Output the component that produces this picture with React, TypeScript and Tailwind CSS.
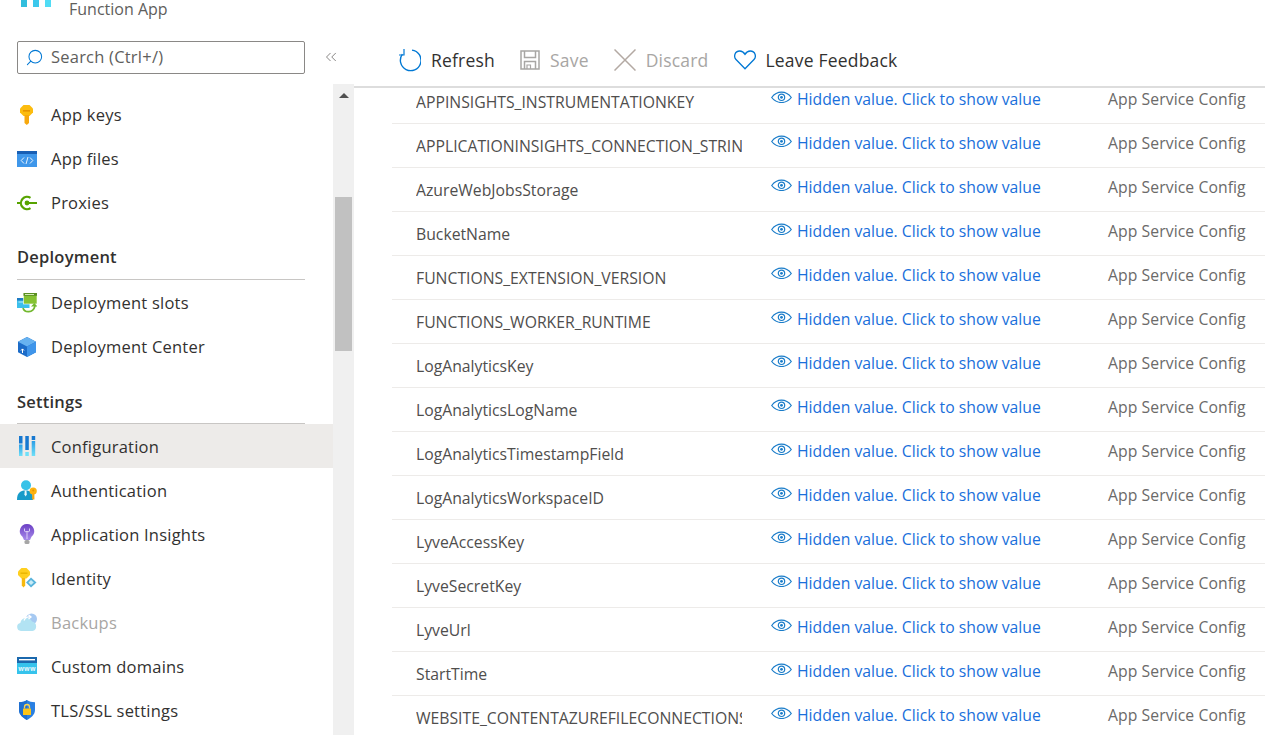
import { ChevronsLeft, Search } from "lucide-react";
import type { ReactNode } from "react";

const settings = [
  "APPINSIGHTS_INSTRUMENTATIONKEY",
  "APPLICATIONINSIGHTS_CONNECTION_STRING",
  "AzureWebJobsStorage",
  "BucketName",
  "FUNCTIONS_EXTENSION_VERSION",
  "FUNCTIONS_WORKER_RUNTIME",
  "LogAnalyticsKey",
  "LogAnalyticsLogName",
  "LogAnalyticsTimestampField",
  "LogAnalyticsWorkspaceID",
  "LyveAccessKey",
  "LyveSecretKey",
  "LyveUrl",
  "StartTime",
  "WEBSITE_CONTENTAZUREFILECONNECTIONSTRING",
];

function Icon({ children }: { children: ReactNode }) {
  return (
    <svg width="20" height="20" viewBox="0 0 20 20" className="shrink-0">
      {children}
    </svg>
  );
}

const KeyIcon = () => (
  <Icon>
    <path d="M6.500 0h6l3.500 3.500v4L12.500 11h-6L3 7.500v-4z" fill="#fcbc0f" />
    <path d="M7.500 10h4.500v8l-2.200 2-2.300-2z" fill="#f7a80d" />
    <rect x="6" y="5" width="7" height="1.600" fill="#e59400" />
  </Icon>
);

const FilesIcon = () => (
  <Icon>
    <rect x="0" y="2" width="20" height="16" fill="#3f97ea" />
    <rect x="0" y="2" width="20" height="3" fill="#185fb4" />
    <path d="M7 8.500l-2.800 3L7 14.500M13 8.500l2.800 3-2.800 3M11 8l-2 7" stroke="#e8f3fd" strokeWidth="1" fill="none" />
  </Icon>
);

const ProxyIcon = () => (
  <Icon>
    <path d="M0 10h4M10 10h10" stroke="#57a300" strokeWidth="2" />
    <path d="M13.500 4.800a6.200 6.200 0 1 0 0 10.400" stroke="#57a300" strokeWidth="2.200" fill="none" />
    <circle cx="10" cy="10" r="2.400" fill="#57a300" />
  </Icon>
);

const SlotsIcon = () => (
  <Icon>
    <rect x="0" y="5" width="12.500" height="10" fill="#3cc0ec" />
    <rect x="0" y="5" width="12.500" height="2.500" fill="#1e7cc4" />
    <rect x="1.500" y="8.500" width="6" height="1" fill="#bdeafa" />
    <rect x="6.500" y="0" width="13.500" height="11" fill="#86c232" stroke="#fff" strokeWidth="0.600" />
    <rect x="6.500" y="0" width="13.500" height="2.800" fill="#5a8f22" />
    <rect x="8" y="1" width="9" height="1" fill="#d5ecb6" />
    <path d="M6 15c1.500 5 10 5.500 12-2" stroke="#72b82e" strokeWidth="1.700" fill="none" />
    <path d="M14 13.500h6.500l-3.200-3.500z" fill="#72b82e" />
  </Icon>
);

const CenterIcon = () => (
  <Icon>
    <path d="M10 0l9 4.800v10.400L10 20l-9-4.800V4.800z" fill="#1c6cc8" />
    <path d="M10 0l9 4.800L10 9.500 1 4.800z" fill="#67b2f0" />
    <path d="M10 9.500V20l9-4.800V4.800z" fill="#3f95ea" />
    <path d="M5.500 16v-4M4 13.500l1.500-1.600L7 13.500" stroke="#fff" strokeWidth="1" fill="none" />
  </Icon>
);

const ConfigIcon = () => (
  <Icon>
    <defs>
      <linearGradient id="cfg" x1="0" y1="0" x2="0" y2="1">
        <stop offset="0" stopColor="#2c9ee6" />
        <stop offset="1" stopColor="#6fe0f8" />
      </linearGradient>
    </defs>
    <rect x="2" y="0" width="3.500" height="7.500" fill="#1778d0" />
    <rect x="2" y="8.500" width="3.500" height="11.500" fill="url(#cfg)" />
    <rect x="8.300" y="0" width="3.500" height="14" fill="#1778d0" />
    <rect x="8.300" y="16" width="3.500" height="4" fill="#6fe0f8" />
    <rect x="14.700" y="0" width="3.500" height="4" fill="#1778d0" />
    <rect x="14.700" y="5" width="3.500" height="15" fill="url(#cfg)" />
  </Icon>
);

const AuthIcon = () => (
  <Icon>
    <circle cx="9" cy="5.200" r="5" fill="#37c2e8" />
    <path d="M0 20c0-7 3-9.500 8.500-9.500S16 13 16 20z" fill="#179bc9" />
    <path d="M7.800 10.500h1.600l.4 4-1.200 2-1.200-2z" fill="#e6f7fc" />
    <circle cx="16.200" cy="11" r="3.600" fill="#fcb30f" />
    <circle cx="16.200" cy="10.500" r="1" fill="#e59400" />
    <rect x="15.200" y="13.500" width="2.200" height="6" fill="#f7a80d" />
  </Icon>
);

const InsightsIcon = () => (
  <Icon>
    <defs>
      <linearGradient id="bulb" x1="0" y1="0" x2="0" y2="1">
        <stop offset="0" stopColor="#6b3fc4" />
        <stop offset="1" stopColor="#a78bea" />
      </linearGradient>
    </defs>
    <path d="M10 0a7.200 7.200 0 0 0-4.500 12.800L7 16h6l1.500-3.200A7.200 7.200 0 0 0 10 0z" fill="url(#bulb)" />
    <path d="M7.500 4.500v2.500c0 1 2.500 1 2.500 0M12.500 4.500v2.500c0 1-2.500 1-2.500 0M10 7v8" stroke="#efe8fc" strokeWidth="0.800" fill="none" />
    <rect x="7.500" y="16" width="5" height="4" rx="1.500" fill="#a6a6a6" />
  </Icon>
);

const IdentityIcon = () => (
  <Icon>
    <path d="M4.500 0h5L13 3.500v3.500L9.500 10.500h-5L1 7V3.500z" fill="#ffcf1f" />
    <path d="M4.800 10h3.400v7.500L6.500 19.500 4.800 17.500z" fill="#f7b90f" />
    <rect x="3.500" y="4.500" width="7" height="1.400" fill="#e8b400" />
    <path d="M14 9.500l5.500 5-5.500 5-5-5z" fill="#59b4dc" />
    <path d="M14 12l2.800 2.500L14 17l-2.500-2.500z" fill="#c9ecf7" />
  </Icon>
);

const BackupIcon = () => (
  <Icon>
    <circle cx="14.500" cy="7" r="5.500" fill="#a6c9f2" />
    <path d="M4 19a4 4 0 0 1-.7-7.900A6.200 6.200 0 0 1 15 9.600a4.800 4.800 0 0 1 .5 9.400z" fill="#b2e3f3" />
    <path d="M7 8.500c1.300-3 4-4 6.500-3.500M11.500 2.800l2.500 2.200-2.500 2" stroke="#fff" strokeWidth="1.300" fill="none" />
  </Icon>
);

const DomainIcon = () => (
  <Icon>
    <rect x="0" y="1" width="20" height="17" fill="#36c3ec" />
    <rect x="0" y="1" width="20" height="6" fill="#1b68ad" />
    <rect x="2" y="3" width="16" height="1.400" fill="#fff" />
    <text x="10" y="14.500" textAnchor="middle" fontSize="6.500" fontWeight="700" fill="#e6f8fd">
      www
    </text>
  </Icon>
);

const ShieldIcon = () => (
  <Icon>
    <path d="M10 0c2 1.500 5 2.200 8 2.200v7.800c0 5-4.500 8-8 10-3.500-2-8-5-8-10V2.200C5 2.200 8 1.500 10 0z" fill="#2a80e2" />
    <path d="M10 0c-2 1.500-5 2.200-8 2.200v7.800c0 5 4.500 8 8 10z" fill="#1f6fd0" />
    <rect x="6" y="8.500" width="8" height="6.500" rx="0.500" fill="#fcc419" />
    <path d="M7.500 8.500V7a2.500 2.500 0 0 1 5 0v1.500" stroke="#fcd34d" strokeWidth="1.300" fill="none" />
  </Icon>
);

const RefreshIcon = () => (
  <svg width="22" height="24" viewBox="0 0 22 24" className="shrink-0" fill="none" stroke="#0078d4" strokeWidth="1.400">
    <path d="M13 2.100A10.300 10.300 0 1 1 3.400 6.200" />
    <path d="M5 1v6H0" strokeWidth="1.200" />
  </svg>
);

const SaveIcon = () => (
  <svg width="20" height="20" viewBox="0 0 20 20" className="shrink-0" fill="none" stroke="#a8a6a4" strokeWidth="1.500">
    <path d="M1 1h18v18H1z" />
    <path d="M4.500 1v6.500h11V1M4.500 19v-7.500h11V19" />
    <path d="M7 19v-4h3.500v4" strokeWidth="1.200" />
  </svg>
);

const DiscardIcon = () => (
  <svg width="22" height="22" viewBox="0 0 22 22" className="shrink-0" fill="none" stroke="#b3a9a3" strokeWidth="1.500">
    <path d="M0.500 0.500l21 21M21.500 0.500l-21 21" />
  </svg>
);

const HeartIcon = () => (
  <svg width="22" height="20" viewBox="0 0 22 20" className="shrink-0" fill="none" stroke="#0078d4" strokeWidth="1.300">
    <path d="M11 18.800L2 9.500C-.5 6.800.5 1 5.800 1 8.300 1 10 2.700 11 4.300 12 2.700 13.700 1 16.200 1c5.300 0 6.300 5.800 3.800 8.500z" />
  </svg>
);

const EyeIcon = () => (
  <svg width="21" height="12" viewBox="0 0 21 12" className="-mt-[6px] shrink-0" fill="none" stroke="#1a7cc9" strokeWidth="1.200">
    <path d="M0.700 6.500C3.500 2.800 7 1.200 10.500 1.200s7 1.600 9.800 5.300c-2.800 3.600-6.300 5-9.800 5s-7-1.400-9.800-5z" />
    <circle cx="10.500" cy="6.300" r="3.200" />
    <circle cx="10.500" cy="6.300" r="1.400" fill="#1a7cc9" stroke="none" />
  </svg>
);

function NavItem({
  icon,
  label,
  active,
  disabled,
}: {
  icon: ReactNode;
  label: string;
  active?: boolean;
  disabled?: boolean;
}) {
  return (
    <div
      className={`flex h-[44px] items-center gap-[14px] pl-[17px] ${active ? "bg-[#edebe9]" : ""} ${
        disabled ? "text-[#a8a6a4]" : "text-[#323130]"
      }`}
    >
      {icon}
      <span className="pt-[1px]">{label}</span>
    </div>
  );
}

function NavHeading({ label, raised }: { label: string; raised?: boolean }) {
  return (
    <div className="mr-[28px] ml-[17px] flex h-[32px] items-center border-b border-[#c8c6c4] font-semibold text-[#323130]">
      <span className={raised ? "-mt-[13px]" : "-mt-[11px]"}>{label}</span>
    </div>
  );
}

function ToolButton({ icon, label, disabled }: { icon: ReactNode; label: string; disabled?: boolean }) {
  return (
    <div className={`flex items-center gap-[10px] ${disabled ? "text-[#a8a6a4]" : "text-[#323130]"}`}>
      {icon}
      <span className="pt-[2px]">{label}</span>
    </div>
  );
}

export default function App() {
  return (
    <div
      className="flex h-[735px] w-[1265px] overflow-hidden bg-white"
      style={{ fontFamily: '"Open Sans", "Noto Sans", sans-serif' }}
    >
      {/* Left blade menu */}
      <aside className="flex w-[354px] shrink-0 flex-col text-[16.5px] tracking-[0.22px]">
        <div className="h-[41px] shrink-0 overflow-hidden">
          <div className="flex h-[19px] items-start">
            <div className="ml-[21px] flex h-[7px] w-[30px] gap-[6px]">
              <div className="w-[6px] bg-[#32bedd]" />
              <div className="w-[6px] bg-[#3cc8ec]" />
              <div className="w-[6px] bg-[#50dcf5]" />
            </div>
            <span className="ml-[18px] -mt-[3px] text-[16px] tracking-normal text-[#605e5c]">Function App</span>
          </div>
        </div>
        <div className="flex h-[43px] shrink-0 items-start">
          <div className="ml-[17px] flex h-[33px] w-[288px] items-center gap-[7px] rounded-[2px] border border-[#8a8886] pl-[7px] text-[#605e5c]">
            <Search size={19} strokeWidth={1.3} className="-scale-x-100 text-[#0078d4]" />
            <span>Search (Ctrl+/)</span>
          </div>
          <ChevronsLeft size={18} strokeWidth={1} className="ml-[17px] mt-[7px] text-[#605e5c]" />
        </div>
        <div className="flex min-h-0 flex-1">
          <nav className="w-[333px] shrink-0 pt-[9px]">
            <NavItem icon={<KeyIcon />} label="App keys" />
            <NavItem icon={<FilesIcon />} label="App files" />
            <NavItem icon={<ProxyIcon />} label="Proxies" />
            <div className="h-[23px]" />
            <NavHeading label="Deployment" raised />
            <div className="h-[1px]" />
            <NavItem icon={<SlotsIcon />} label="Deployment slots" />
            <NavItem icon={<CenterIcon />} label="Deployment Center" />
            <div className="h-[23px]" />
            <NavHeading label="Settings" />
            <div className="[&_span]:pt-[3px]">
              <NavItem icon={<ConfigIcon />} label="Configuration" active />
              <NavItem icon={<AuthIcon />} label="Authentication" />
              <NavItem icon={<InsightsIcon />} label="Application Insights" />
              <NavItem icon={<IdentityIcon />} label="Identity" />
              <NavItem icon={<BackupIcon />} label="Backups" disabled />
              <NavItem icon={<DomainIcon />} label="Custom domains" />
              <NavItem icon={<ShieldIcon />} label="TLS/SSL settings" />
            </div>
          </nav>
          {/* Scrollbar */}
          <div className="w-[21px] shrink-0 bg-[#f0f0f0] px-[2px]">
            <div className="mx-auto mt-[9px] h-0 w-0 border-x-[5px] border-b-[5px] border-x-transparent border-b-[#505050]" />
            <div className="mt-[99px] h-[154px] bg-[#c1c1c1]" />
          </div>
        </div>
      </aside>

      {/* Configuration content */}
      <main className="flex min-w-0 flex-1 flex-col">
        <div className="flex h-[88px] shrink-0 items-center gap-[25px] border-b-2 border-[#dddddd] pt-[33px] pl-[45px] text-[17.5px] tracking-[0.2px]">
          <ToolButton icon={<RefreshIcon />} label="Refresh" />
          <ToolButton icon={<SaveIcon />} label="Save" disabled />
          <ToolButton icon={<DiscardIcon />} label="Discard" disabled />
          <ToolButton icon={<HeartIcon />} label="Leave Feedback" />
        </div>
        <div className="min-h-0 flex-1 overflow-hidden pl-[38px] text-[15.75px]">
          <div className="-mt-[8px]">
            {settings.map((name) => (
              <div key={name} className="flex h-[44px] items-center border-b border-[#edebe9] pl-[24px]">
                <div className="w-[326px] shrink-0 overflow-hidden pt-[3px] whitespace-nowrap text-[#4f4e4d]">
                  {name}
                </div>
                <div className="ml-[29px] flex w-[337px] shrink-0 items-center gap-[5px] pb-[3px] text-[#1a6fdb]">
                  <EyeIcon />
                  <span>Hidden value. Click to show value</span>
                </div>
                <div className="pb-[3px] whitespace-nowrap tracking-[0.07px] text-[#6b6a69]">App Service Config</div>
              </div>
            ))}
          </div>
        </div>
      </main>
    </div>
  );
}
